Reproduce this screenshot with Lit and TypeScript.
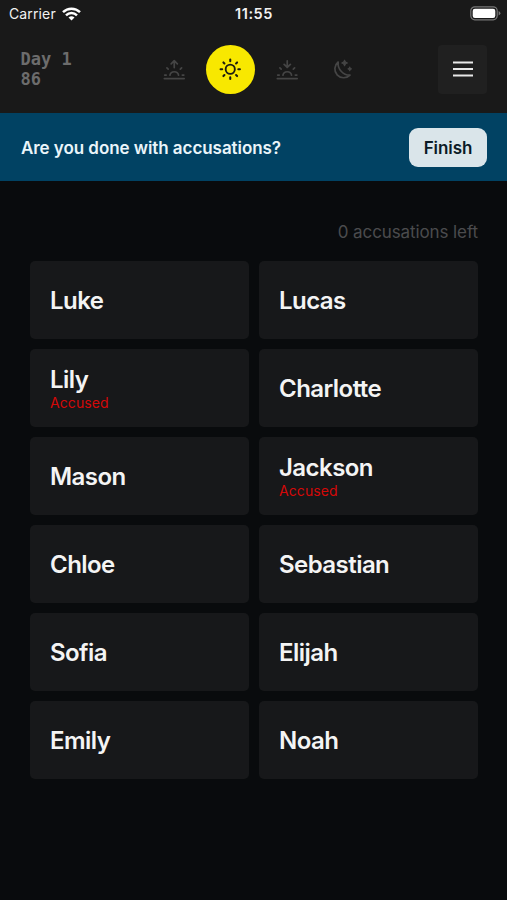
import { LitElement, html, css, svg } from "lit";
import { customElement, property } from "lit/decorators.js";

const phases = {
  sunrise: svg`<path d="M1.4 21.9H22.6M1.8 18.2H3.4M20.6 18.2H22.2M4.2 10.6L5.5 11.9M19.8 10.6L18.5 11.9M7.4 18.4A4.7 4.7 0 0 1 16.6 18.4M12 10.2V3M8.7 6.2L12 2.9L15.3 6.2"/>`,
  sun: svg`<circle cx="12" cy="12" r="4.9" stroke-width="2"/><path stroke-width="2.2" d="M12 1.7V3.4M12 20.6V22.3M1.7 12H3.4M20.6 12H22.3M4.7 4.7L5.8 5.8M18.2 18.2L19.3 19.3M4.7 19.3L5.8 18.2M18.2 5.8L19.3 4.7"/>`,
  sunset: svg`<path d="M1.4 21.9H22.6M1.8 18.2H3.4M20.6 18.2H22.2M4.2 10.6L5.5 11.9M19.8 10.6L18.5 11.9M7.4 18.4A4.7 4.7 0 0 1 16.6 18.4M12 2.9V10M8.7 6.8L12 10.1L15.3 6.8"/>`,
  moon: svg`<path d="M6.6 4.3A9.4 9.4 0 1 0 19.2 18.2C12.5 18.6 5.6 12.2 6.6 4.3Z"/><path fill="currentColor" stroke-width="1.1" d="M13.4 2.3l1 2 2 1-2 1-1 2-1-2-2-1 2-1zM18.9 9.6l.6 1.4 1.4.6-1.4.6-.6 1.4-.6-1.4-1.4-.6 1.4-.6z"/>`,
};

@customElement("status-bar")
class StatusBar extends LitElement {
  static styles = css`
    :host { display: grid; grid-template-columns: 1fr auto 1fr; align-items: center; height: 27px; padding: 0 6px 0 9px; color: #f2f2f2; font-size: 14px; line-height: 18px; }
    .carrier { display: flex; align-items: center; gap: 6px; letter-spacing: 0.13px; }
    .time { margin-right: 2px; font-size: 14.5px; font-weight: 600; letter-spacing: 0.6px; }
    .battery { justify-self: end; }
    svg { display: block; }
  `;
  render() {
    return html`
      <div class="carrier">
        <span>Carrier</span>
        <svg width="19" height="14" viewBox="0 0 19 14" fill="none" stroke="#fff" stroke-width="2.5">
          <path d="M1 5.1A12.2 12.2 0 0 1 18 5.1M4 8.3A7.9 7.9 0 0 1 15 8.3" />
          <path d="M9.5 13.6L6.5 10.6A4.3 4.3 0 0 1 12.5 10.6Z" fill="#fff" stroke="none" />
        </svg>
      </div>
      <div class="time">11:55</div>
      <svg class="battery" width="31" height="15" viewBox="0 0 31 15">
        <rect x=".8" y=".8" width="26.4" height="13" rx="4" fill="none" stroke="#777" stroke-width="1.2" />
        <rect x="2.7" y="2.7" width="22.6" height="9.2" rx="2.2" fill="#fff" />
        <path d="M28.6 5.1Q30.4 5.8 30.4 7.3T28.6 9.5Z" fill="#777" />
      </svg>`;
  }
}

@customElement("phase-icon")
class PhaseIcon extends LitElement {
  @property() name: keyof typeof phases = "sun";
  static styles = css`
    :host { display: flex; align-items: center; justify-content: center; width: 49px; height: 49px; border-radius: 50%; color: #454545; }
    :host([active]) { background: #f8e800; color: #1c1c10; }
  `;
  render() {
    return html`<svg width="22.5" height="22.5" viewBox="0 0 24 24" fill="none" stroke="currentColor" stroke-width="1.8" stroke-linecap="round" stroke-linejoin="round">${phases[this.name]}</svg>`;
  }
}

@customElement("player-card")
class PlayerCard extends LitElement {
  @property() name = "";
  @property({ type: Boolean }) accused = false;
  static styles = css`
    :host { display: flex; flex-direction: column; justify-content: center; box-sizing: border-box; height: 78px; padding: 2px 20px 0; border-radius: 5px; background: #17181a; }
    .name { color: #f4f4f4; font-size: 24px; font-weight: 600; line-height: 28px; letter-spacing: -0.55px; }
    .tag { color: #d40808; font-size: 14px; line-height: 18px; letter-spacing: 0.1px; }
  `;
  render() {
    return html`<div class="name">${this.name}</div>${this.accused ? html`<div class="tag">Accused</div>` : null}`;
  }
}

@customElement("app-root")
class AppRoot extends LitElement {
  players = ["Luke", "Lucas", "Lily", "Charlotte", "Mason", "Jackson", "Chloe", "Sebastian", "Sofia", "Elijah", "Emily", "Noah"];
  accused = new Set(["Lily", "Jackson"]);
  static styles = css`
    :host { display: block; height: 900px; overflow: hidden; background: #090b0d; font-family: Inter, "Liberation Sans", sans-serif; }
    .top { height: 113px; background: #191919; }
    .bar { display: grid; grid-template-columns: 1fr auto 1fr; align-items: center; height: 84px; padding: 0 20px 0 20.5px; }
    .day { color: #6c6c6c; font: 700 17px/20px "DejaVu Sans Mono", monospace; }
    .phases { display: flex; gap: 7.5px; margin-left: 9.5px; }
    .menu { justify-self: end; display: flex; align-items: center; justify-content: center; width: 49px; height: 49px; border: 0; padding: 0; border-radius: 4px; background: #202020; }
    .ask { display: flex; align-items: center; justify-content: space-between; height: 68px; padding: 0 20px 0 21px; background: #014263; color: #eaf5fa; font-size: 17px; font-weight: 600; letter-spacing: -0.06px; }
    .question { padding-top: 1px; }
    .finish { width: 78px; height: 39px; padding: 1px 0 0; border: 0; border-radius: 9px; background: #dae5ea; color: #0b1a26; font: inherit; letter-spacing: inherit; }
    .left { padding: 40px 29px 0 0; color: #4b4b4d; font-size: 17px; line-height: 22px; letter-spacing: -0.1px; text-align: right; }
    .grid { display: grid; grid-template-columns: 1fr 1fr; gap: 10px; padding: 18px 29px 0 30px; }
  `;
  render() {
    return html`
      <header class="top">
        <status-bar></status-bar>
        <div class="bar">
          <div class="day">Day 1<br />86</div>
          <div class="phases">
            <phase-icon name="sunrise"></phase-icon>
            <phase-icon name="sun" active></phase-icon>
            <phase-icon name="sunset"></phase-icon>
            <phase-icon name="moon"></phase-icon>
          </div>
          <button class="menu" aria-label="Menu">
            <svg width="22" height="18" viewBox="0 0 22 18" stroke="#e8e8e8" stroke-width="2.2"><path d="M1 2.5H21M1 9H21M1 15.5H21" /></svg>
          </button>
        </div>
      </header>
      <section class="ask"><span class="question">Are you done with accusations?</span><button class="finish">Finish</button></section>
      <div class="left">0 accusations left</div>
      <main class="grid">${this.players.map((p) => html`<player-card .name=${p} .accused=${this.accused.has(p)}></player-card>`)}</main>`;
  }
}
